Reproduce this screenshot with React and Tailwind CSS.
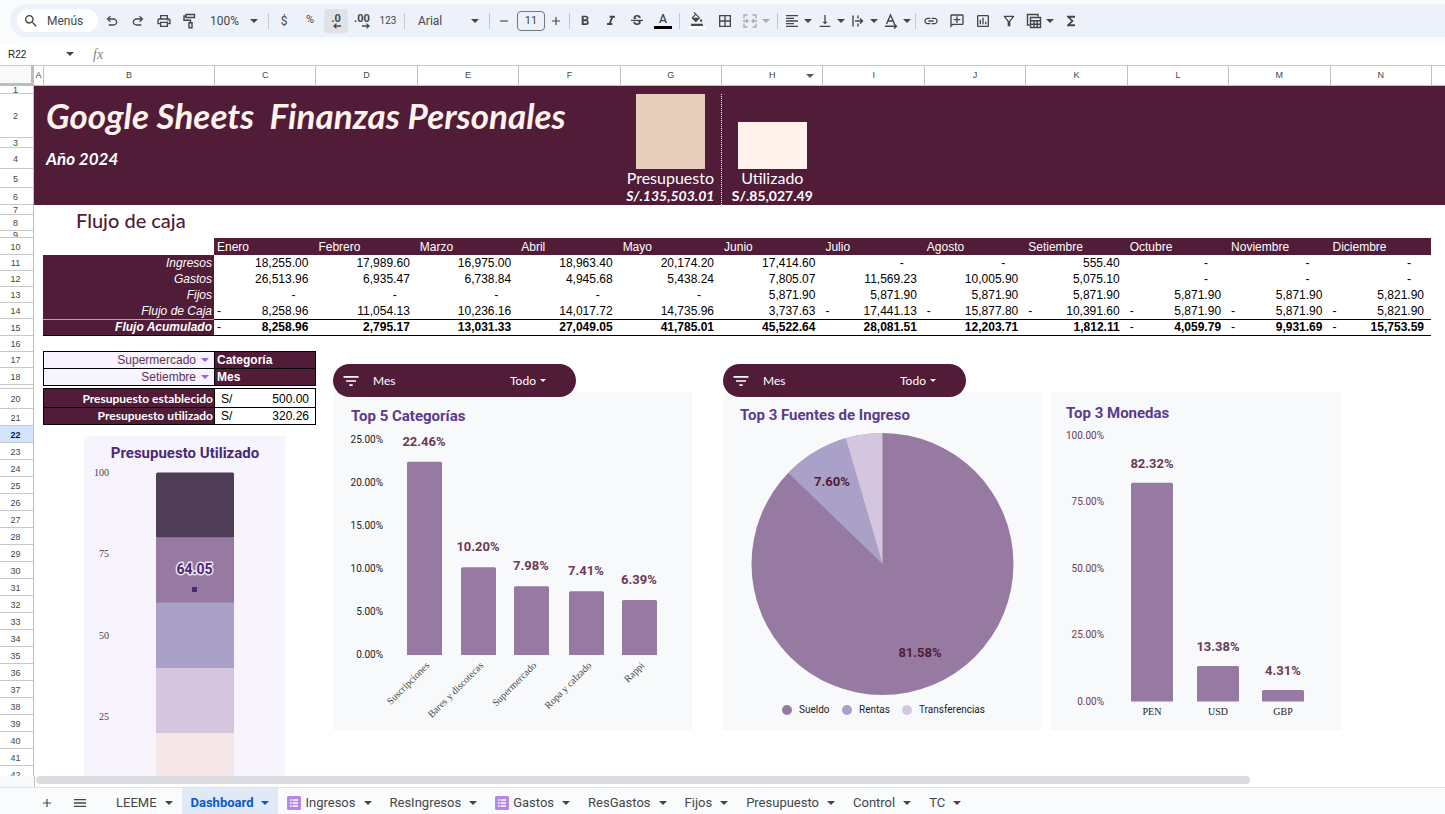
import React from "react";
import {
  MdSearch,
  MdOutlinePrint,
  MdFormatBold,
  MdFormatItalic,
  MdOutlineStrikethroughS,
  MdOutlineFormatColorFill,
  MdBorderAll,
  MdFormatAlignLeft,
  MdVerticalAlignBottom,
  MdLink,
  MdOutlineAddComment,
  MdOutlineInsertChart,
  MdOutlineFilterAlt,
  MdFunctions,
  MdAdd,
  MdRemove,
  MdMenu,
  MdFilterList,
} from "react-icons/md";

const MONTHS = ["Enero", "Febrero", "Marzo", "Abril", "Mayo", "Junio", "Julio", "Agosto", "Setiembre", "Octubre", "Noviembre", "Diciembre"];

const FLOW = [
  { label: "Ingresos", values: [18255, 17989.6, 16975, 18963.4, 20174.2, 17414.6, 0, 0, 555.4, 0, 0, 0] },
  { label: "Gastos", values: [26513.96, 6935.47, 6738.84, 4945.68, 5438.24, 7805.07, 11569.23, 10005.9, 5075.1, 0, 0, 0] },
  { label: "Fijos", values: [0, 0, 0, 0, 0, 5871.9, 5871.9, 5871.9, 5871.9, 5871.9, 5871.9, 5821.9] },
  { label: "Flujo de Caja", values: [-8258.96, 11054.13, 10236.16, 14017.72, 14735.96, 3737.63, -17441.13, -15877.8, -10391.6, -5871.9, -5871.9, -5821.9] },
  { label: "Flujo Acumulado", total: true, values: [-8258.96, 2795.17, 13031.33, 27049.05, 41785.01, 45522.64, 28081.51, 12203.71, 1812.11, -4059.79, -9931.69, -15753.59] },
];

const COLUMNS = ["A", "B", "C", "D", "E", "F", "G", "H", "I", "J", "K", "L", "M", "N", ""];

const TOP_ROWS = [
  [1, "h-2"], [2, "h-11"], [3, "h-2.5"], [4, "h-[21px]"], [5, "h-[19px]"], [6, "h-[17px]"], [7, "h-2.5"],
  [8, "h-4"], [9, "h-[7px]"], [10, "h-[17px]"], [11, "h-4"], [12, "h-4"], [13, "h-4"], [14, "h-4"], [15, "h-[17px]"],
  [16, "h-4"], [17, "h-4"], [18, "h-[17px]"], [19, "h-1"], [20, "h-5"], [21, "h-[17px]"],
];
const LOWER_ROWS = Array.from({ length: 21 }, (_, i) => [22 + i, "h-[17px]"]);
const ROWS = [...TOP_ROWS, ...LOWER_ROWS];

const TABS = [
  { name: "LEEME" },
  { name: "Dashboard", active: true },
  { name: "Ingresos", form: true },
  { name: "ResIngresos" },
  { name: "Gastos", form: true },
  { name: "ResGastos" },
  { name: "Fijos" },
  { name: "Presupuesto" },
  { name: "Control" },
  { name: "TC" },
];

const money = (n) => Math.abs(n).toLocaleString("en-US", { minimumFractionDigits: 2, maximumFractionDigits: 2 });

function Caret({ className = "" }) {
  return (
    <svg viewBox="0 0 8 4" className={`h-1 w-2 shrink-0 ${className}`} fill="currentColor" aria-hidden="true">
      <path d="M0 0h8L4 4z" />
    </svg>
  );
}

function Tool({ label, children, className = "w-6", menu = false }) {
  return (
    <button type="button" aria-label={label} className={`flex h-6 shrink-0 items-center rounded text-[#444746] ${menu ? "gap-1 pl-[3px]" : "justify-center"} ${className}`}>
      {children}
      {menu && <Caret />}
    </button>
  );
}

const Divider = () => <div className="mr-px ml-0.5 h-4 w-px shrink-0 bg-[#c7c7c7]" />;

function Symbol({ d }) {
  return (
    <svg viewBox="0 -960 960 960" className="size-4" fill="currentColor" aria-hidden="true">
      <path d={d} />
    </svg>
  );
}

function Line({ children, className = "size-4" }) {
  return (
    <svg viewBox="0 0 16 16" className={className} fill="none" stroke="currentColor" strokeWidth="1.4" aria-hidden="true">
      {children}
    </svg>
  );
}

function Decimal({ text, right }) {
  return (
    <span className="flex flex-col items-center text-[11px] leading-[11px] font-bold">
      {text}
      <svg viewBox="0 0 8 6" className="-mt-px h-1.5 w-2 self-end" fill="none" stroke="currentColor" strokeWidth="1.3" aria-hidden="true">
        <path d={right ? "M0 3h7M4.500 .6 7 3 4.500 5.400" : "M8 3H1M3.500 .6 1 3l2.500 2.400"} />
      </svg>
    </span>
  );
}

function Toolbar() {
  return (
    <header className="h-[43px] shrink-0 bg-[#f9fbfd] pt-1 pl-2.5">
      <div className="flex h-[33px] items-center gap-0.5 rounded-l-full bg-[#edf2fa] pl-[7px] font-[Roboto,sans-serif] text-[12px] text-[#444746]">
        <button type="button" className="flex h-[23px] w-[81px] shrink-0 items-center gap-2 rounded-full bg-white pl-1.5">
          <MdSearch className="size-4" />
          Menús
        </button>
        <Tool label="Deshacer">
          <Symbol d="M280-200v-80h284q63 0 109.5-40T720-420q0-60-46.5-100T564-560H312l104 104-56 56-200-200 200-200 56 56-104 104h252q97 0 166.5 63T800-420q0 94-69.5 157T564-200H280Z" />
        </Tool>
        <Tool label="Rehacer">
          <Symbol d="M396-200q-97 0-166.5-63T160-420q0-94 69.5-157T396-640h252L544-744l56-56 200 200-200 200-56-56 104-104H396q-63 0-109.5 40T240-420q0 60 46.5 100T396-280h284v80H396Z" />
        </Tool>
        <Tool label="Imprimir"><MdOutlinePrint className="size-4" /></Tool>
        <Tool label="Copiar formato">
          <Line>
            <path d="M4 1.500h8.500v3H4zM4 3H2v4.200h6.500v2.300M7 9.700h3v5H7z" />
          </Line>
        </Tool>
        <button type="button" className="flex h-6 w-[60px] shrink-0 items-center justify-between px-1.5">
          <span>100%</span>
          <Caret />
        </button>
        <Divider />
        <Tool label="Moneda">$</Tool>
        <Tool label="Porcentaje"><span className="text-[11px]">%</span></Tool>
        <Tool label="Reducir decimales" className="w-6 bg-[#dfe3e8]"><Decimal text=".0" /></Tool>
        <Tool label="Aumentar decimales"><Decimal text=".00" right /></Tool>
        <Tool label="Más formatos"><span className="text-[10px]">123</span></Tool>
        <Divider />
        <button type="button" className="flex h-6 w-[77px] shrink-0 items-center justify-between pr-1.5 pl-2.5">
          <span>Arial</span>
          <Caret />
        </button>
        <Divider />
        <Tool label="Reducir tamaño" className="w-[22px]"><MdRemove className="size-3.5" /></Tool>
        <input aria-label="Tamaño de fuente" defaultValue="11" className="h-5 w-7 shrink-0 rounded border border-[#747775] bg-transparent text-center text-[11px]" />
        <Tool label="Aumentar tamaño" className="w-[18px]"><MdAdd className="size-3.5" /></Tool>
        <Divider />
        <Tool label="Negrita"><MdFormatBold className="size-4" /></Tool>
        <Tool label="Cursiva"><MdFormatItalic className="size-4" /></Tool>
        <Tool label="Tachado"><MdOutlineStrikethroughS className="size-4" /></Tool>
        <Tool label="Color del texto">
          <span className="flex w-[18px] flex-col items-center border-b-[3px] border-black text-[12px] leading-[13px] font-medium">A</span>
        </Tool>
        <Divider />
        <Tool label="Color de relleno" className="w-7">
          <span className="flex w-[18px] flex-col items-center border-b-[3px] border-white"><MdOutlineFormatColorFill className="size-3.5" /></span>
        </Tool>
        <Tool label="Bordes"><MdBorderAll className="size-4" /></Tool>
        <Tool label="Combinar celdas" menu className="w-[34px] opacity-40">
          <Line>
            <path d="M5.500 2H2v3.500M10.500 2H14v3.500M5.500 14H2v-3.500M10.500 14H14v-3.500M0.800 8h5M10.200 8h5M4.200 6.200 6 8l-1.800 1.800M11.800 6.200 10 8l1.800 1.800" />
          </Line>
        </Tool>
        <Divider />
        <Tool label="Alinear" menu className="w-[31px]"><MdFormatAlignLeft className="size-4" /></Tool>
        <Tool label="Alineación vertical" menu className="w-[31px]"><MdVerticalAlignBottom className="size-4" /></Tool>
        <Tool label="Ajuste de texto" menu className="w-[31px]">
          <Line><path d="M3 2.500v11M8 2.500v3M8 10.500v3M5 8h7.500M10 5.500 12.500 8 10 10.500" /></Line>
        </Tool>
        <Tool label="Rotación de texto" menu className="w-[31px]">
          <Line><path d="M3.500 11 7.500 2l4 9M5 8h5M2 13.300h11M11 11l2.500 2.300L11 15.500" /></Line>
        </Tool>
        <Divider />
        <Tool label="Insertar enlace"><MdLink className="size-4" /></Tool>
        <Tool label="Insertar comentario"><MdOutlineAddComment className="size-4 -scale-x-100" /></Tool>
        <Tool label="Insertar gráfico"><MdOutlineInsertChart className="size-4" /></Tool>
        <Tool label="Crear filtro"><MdOutlineFilterAlt className="size-4" /></Tool>
        <Tool label="Vistas de tabla" menu className="w-[34px]">
          <Line>
            <path d="M12 3.500V1.500H1.500V12H3.500M4.500 4.500h10v10h-10zM4.500 7.800h10M4.500 11.200h10M8 7.800v6.700M11.200 7.800v6.700" />
          </Line>
        </Tool>
        <Tool label="Funciones"><MdFunctions className="size-4" /></Tool>
      </div>
    </header>
  );
}

function FormulaBar() {
  return (
    <div className="flex h-[23px] shrink-0 items-center border-b border-[#c7c7c7] bg-white pl-2">
      <button type="button" className="flex w-[66px] items-center justify-between font-['Liberation_Sans',Arial,sans-serif] text-[10px] text-[#202124]">
        <span>R22</span>
        <Caret className="text-[#444746]" />
      </button>
      <span className="ml-[19px] font-['Liberation_Serif',serif] text-[14px] text-[#80868b] italic">fx</span>
      <input aria-label="Fórmula" className="ml-3 min-w-0 flex-1 outline-none" />
    </div>
  );
}

function ColumnHeaders() {
  return (
    <div className="flex h-5 shrink-0 text-[9px] text-[#44474a]">
      <div className="w-[34px] shrink-0 border-r-[3px] border-b-[3px] border-[#bdbdbd] bg-[#f8f9fa]" />
      <div className="grid flex-1 grid-cols-[9px_171px_repeat(12,minmax(0,1fr))_14px] border-b border-[#c0c0c0]">
        {COLUMNS.map((c, i) => (
          <div key={i} className="relative flex items-center justify-center border-l border-[#c0c0c0] first:border-l-0">
            {c}
            {c === "H" && <Caret className="absolute right-2 text-[#575b5f]" />}
          </div>
        ))}
      </div>
    </div>
  );
}

function RowHeaders() {
  return (
    <div className="w-[34px] shrink-0 border-r border-[#c0c0c0] text-[9px] text-[#44474a]">
      {ROWS.map(([n, h]) => (
        <div
          key={n}
          className={`flex items-center justify-center overflow-hidden border-b border-[#c7c7c7] pr-0.5 leading-none ${h} ${n === 19 ? "" : "pt-0.5"} ${n === 22 ? "bg-[#d3e3fd] font-bold text-[#041e49]" : ""}`}
        >
          {n === 19 ? "" : n}
        </div>
      ))}
    </div>
  );
}

function Banner() {
  return (
    <section className="grid h-[119px] grid-cols-[9px_171px_repeat(12,minmax(0,1fr))_14px] bg-[#511c37] font-[Lato,sans-serif] text-white">
      <div className="col-start-2 col-end-7 pt-2 pl-[3px] font-bold text-[#fff3eb] italic">
        <h1 className="text-[35px] leading-[42px] whitespace-pre">{"Google Sheets  Finanzas Personales"}</h1>
        <p className="pt-3 text-[17px] leading-[22px] text-white">Año 2024</p>
      </div>
      <div className="col-start-7 mt-2 flex flex-col items-center justify-end">
        <div className="h-[75px] w-[69px] bg-[#e6cebd]" />
        <p className="text-[16px] leading-[18px]">Presupuesto</p>
        <p className="text-[14px] leading-[18px] font-bold italic">S/.135,503.01</p>
      </div>
      <div className="col-start-8 mt-2 flex flex-col items-center justify-end border-l border-dotted border-white">
        <div className="h-[47px] w-[69px] bg-[#fff3eb]" />
        <p className="text-[16px] leading-[18px]">Utilizado</p>
        <p className="text-[14px] leading-[18px] font-bold">S/.85,027.49</p>
      </div>
    </section>
  );
}

function Amount({ value }) {
  if (value === 0) return <div className="pr-5 text-right">-</div>;
  return (
    <div className="flex justify-between pr-[7px] pl-[3px]">
      <span className="font-normal">{value < 0 ? "-" : ""}</span>
      <span>{money(value)}</span>
    </div>
  );
}

function CashFlow() {
  return (
    <section className="pr-[14px] pl-[9px]">
      <h2 className="h-[33px] pl-[33px] font-[Lato,sans-serif] text-[20px] leading-[30px] font-medium text-[#511c37]">Flujo de caja</h2>
      <table className="w-full table-fixed border-separate border-spacing-0 text-[12px] leading-4">
        <thead>
          <tr>
            <th className="w-[171px]" aria-label="Concepto" />
            {MONTHS.map((m) => (
              <th key={m} scope="col" className="h-[17px] bg-[#511c37] p-0 pt-0.5 pl-[3px] text-left leading-[15px] font-normal text-white">{m}</th>
            ))}
          </tr>
        </thead>
        <tbody>
          {FLOW.map((row) => (
            <tr key={row.label} className={row.total ? "font-bold leading-[15px]" : ""}>
              <th
                scope="row"
                className={`bg-[#511c37] p-0 pr-0.5 text-right text-white italic ${row.total ? "border-y border-t-[#b9a3b0] border-b-black font-bold" : "font-normal"}`}
              >
                {row.label}
              </th>
              {row.values.map((v, i) => (
                <td key={i} className={`p-0 text-black ${row.total ? "border-y border-black" : ""}`}>
                  <Amount value={v} />
                </td>
              ))}
            </tr>
          ))}
        </tbody>
      </table>
    </section>
  );
}

function CellSelect({ id, value }) {
  return (
    <div className="relative flex items-center bg-[#f7f3ff] text-[#5c3550]">
      <select id={id} defaultValue={value} className="h-4 w-full appearance-none pr-[18px] leading-4 [text-align-last:right]">
        <option>{value}</option>
      </select>
      <Caret className="pointer-events-none absolute right-[5px] text-[#9361f0]" />
    </div>
  );
}

function FilterCells() {
  const head = "bg-[#511c37] font-bold text-white";
  return (
    <div className="w-[273px] text-[12px] leading-4">
      <table className="w-full table-fixed border-collapse">
        <tbody>
          {[["categoria", "Supermercado", "Categoría"], ["mes", "Setiembre", "Mes"]].map(([id, value, label]) => (
            <tr key={id}>
              <td className="w-[171px] border border-black p-0"><CellSelect id={id} value={value} /></td>
              <th scope="row" className={`border border-black p-0 pl-0.5 text-left ${head}`}><label htmlFor={id}>{label}</label></th>
            </tr>
          ))}
        </tbody>
      </table>
      <table className="mt-0.5 w-full table-fixed border-collapse">
        <tbody>
          {[["Presupuesto establecido", "500.00", "h-[19px]"], ["Presupuesto utilizado", "320.26", "h-[17px]"]].map(([label, value, h]) => (
            <tr key={label} className={h}>
              <th scope="row" className={`w-[171px] border border-black p-0 pr-px text-right align-bottom font-[Lato,sans-serif] ${head}`}>{label}</th>
              <td className="border border-black p-0 align-bottom">
                <div className="flex justify-between pr-1.5 pl-1.5"><span>S/</span><span>{value}</span></div>
              </td>
            </tr>
          ))}
        </tbody>
      </table>
    </div>
  );
}

const TITLE = "font-[Roboto,sans-serif] text-[15px] font-bold fill-[#5b3a8c]";
const VALUE = "font-[Roboto,sans-serif] text-[13px] font-bold";

function BudgetChart() {
  const bands = ["#4f3c57", "#967aa1", "#aaa1c8", "#d5c6e0", "#f5e6e8"];
  return (
    <svg width="201" height="385" viewBox="0 0 201 385" role="img" aria-label="Presupuesto Utilizado" className="mt-[11px] ml-[41px] bg-[#f7f4fe]">
      <text x="101" y="22" textAnchor="middle" className="font-[Roboto,sans-serif] text-[15px] font-bold fill-[#4b2a74]">Presupuesto Utilizado</text>
      {[100, 75, 50, 25].map((t, i) => (
        <text key={t} x="25" y={40 + i * 81.3} textAnchor="end" className="font-['Liberation_Serif',serif] text-[10px] fill-[#444444]">{t}</text>
      ))}
      {bands.map((c, i) => (
        <rect key={c} x="72" y={36.5 + i * 65.2} width="78" height="65.2" rx={i === 0 ? 1.5 : 0} fill={c} />
      ))}
      <text x="110.5" y="138" textAnchor="middle" strokeWidth="3" strokeLinejoin="round" className="font-[Roboto,sans-serif] text-[14px] font-bold fill-[#4b2a74] stroke-[#ece4f4] [paint-order:stroke]">64.05</text>
      <rect x="108" y="151" width="5" height="5" fill="#4b2a74" />
    </svg>
  );
}

function CategoriesChart() {
  const bars = [
    ["Suscripciones", 22.46, 74], ["Bares y discotecas", 10.2, 128], ["Supermercado", 7.98, 181],
    ["Ropa y calzado", 7.41, 236], ["Rappi", 6.39, 289],
  ];
  return (
    <svg width="359" height="338" viewBox="0 0 359 338" role="img" aria-label="Top 5 Categorías" className="bg-[#f8f9fb]">
      <text x="18" y="29" className={TITLE}>Top 5 Categorías</text>
      {[25, 20, 15, 10, 5, 0].map((t, i) => (
        <text key={t} x="50" y={51 + i * 43} textAnchor="end" className="font-[Roboto,sans-serif] text-[10px] fill-[#222222]">{t.toFixed(2)}%</text>
      ))}
      {bars.map(([name, v, x]) => {
        const h = v * 8.6;
        return (
          <g key={name}>
            <path d={`M${x} 263v${-(h - 1.5)}q0-1.500 1.500-1.500h32q1.500 0 1.500 1.500v${h - 1.5}z`} fill="#967aa1" />
            <text x={x + 17} y={262 - h - 15} textAnchor="middle" className={`${VALUE} fill-[#6b3a56]`}>{v.toFixed(2)}%</text>
            <text transform={`translate(${x + 23} 274) rotate(-45)`} textAnchor="end" className="font-['Liberation_Serif',serif] text-[10px] fill-[#444444]">{name}</text>
          </g>
        );
      })}
    </svg>
  );
}

function IncomeChart() {
  const legend = [["Sueldo", 64, "#967aa1"], ["Rentas", 124, "#aaa1c8"], ["Transferencias", 184, "#d5c6e0"]];
  return (
    <svg width="318" height="338" viewBox="0 0 318 338" role="img" aria-label="Top 3 Fuentes de Ingreso" className="bg-[#f8f9fb]">
      <text x="17" y="28" className={TITLE}>Top 3 Fuentes de Ingreso</text>
      <circle cx="159.5" cy="172" r="131" fill="#967aa1" />
      <path d="M159.500 172 65.400 80.900A131 131 0 0 1 122.700 46.300z" fill="#aaa1c8" />
      <path d="M159.500 172 122.700 46.300A131 131 0 0 1 159.500 41z" fill="#d5c6e0" />
      <text x="109" y="94" textAnchor="middle" className={`${VALUE} fill-[#511c37]`}>7.60%</text>
      <text x="197" y="265" textAnchor="middle" className={`${VALUE} fill-[#511c37]`}>81.58%</text>
      {legend.map(([name, x, c]) => (
        <g key={name}>
          <circle cx={x} cy="318" r="5" fill={c} />
          <text x={x + 12} y="321" className="font-[Roboto,sans-serif] text-[10px] fill-[#222222]">{name}</text>
        </g>
      ))}
    </svg>
  );
}

function CurrencyChart() {
  const bars = [["PEN", 82.32, 80], ["USD", 13.38, 146], ["GBP", 4.31, 211]];
  return (
    <svg width="290" height="338" viewBox="0 0 290 338" role="img" aria-label="Top 3 Monedas" className="bg-[#f8f9fb]">
      <text x="15" y="26" className={TITLE}>Top 3 Monedas</text>
      {[100, 75, 50, 25, 0].map((t, i) => (
        <text key={t} x="53" y={47 + i * 66.4} textAnchor="end" className="font-[Roboto,sans-serif] text-[10px] fill-[#6b3a56]">{t.toFixed(2)}%</text>
      ))}
      {bars.map(([name, v, x]) => {
        const h = v * 2.656;
        return (
          <g key={name}>
            <path d={`M${x} 309.500v${-(h - 1.5)}q0-1.500 1.500-1.500h39q1.500 0 1.500 1.500v${h - 1.5}z`} fill="#967aa1" />
            <text x={x + 21} y={309.5 - h - 15} textAnchor="middle" className={`${VALUE} fill-[#6b3a56]`}>{v.toFixed(2)}%</text>
            <text x={x + 21} y="323" textAnchor="middle" className="font-['Liberation_Serif',serif] text-[10px] fill-[#222222]">{name}</text>
          </g>
        );
      })}
    </svg>
  );
}

function Slicer({ id }) {
  return (
    <div className="relative z-10 -mb-[5px] flex h-[33px] w-[243px] items-center rounded-full bg-[#511c37] pl-2 font-[Lato,sans-serif] text-[12px] text-white">
      <MdFilterList className="size-5" />
      <label htmlFor={id} className="ml-3 flex-1">Mes</label>
      <div className="relative mr-[30px] flex items-center">
        <select id={id} defaultValue="Todo" className="w-9 appearance-none">
          <option>Todo</option>
        </select>
        <svg viewBox="0 0 6 3" className="pointer-events-none absolute right-0 h-[3px] w-1.5" fill="currentColor" aria-hidden="true"><path d="M0 0h6L3 3z" /></svg>
      </div>
    </div>
  );
}

function Sheet() {
  return (
    <main className="flex min-h-0 flex-1 overflow-hidden bg-white">
      <RowHeaders />
      <div className="min-w-0 flex-1">
        <Banner />
        <CashFlow />
        <div className="flex pt-[15px] pl-[9px]">
          <div className="shrink-0">
            <FilterCells />
            <BudgetChart />
          </div>
          <div className="ml-[17px] flex shrink-0 items-start pt-[13px]">
            <div>
              <Slicer id="mes-categorias" />
              <CategoriesChart />
            </div>
            <div className="ml-[31px]">
              <Slicer id="mes-ingresos" />
              <IncomeChart />
            </div>
            <div className="ml-2.5 pt-7">
              <CurrencyChart />
            </div>
          </div>
        </div>
      </div>
    </main>
  );
}

function FormIcon() {
  return (
    <svg viewBox="0 0 14 14" className="size-3.5" aria-hidden="true">
      <rect width="14" height="14" rx="1.5" fill="#b886e8" />
      <path d="M3 4h1.500M3 7h1.500M3 10h1.500M5.500 4H11M5.500 7H11M5.500 10H11" stroke="#ffffff" strokeWidth="1.5" />
    </svg>
  );
}

function SheetTabs() {
  return (
    <footer className="flex h-[27px] shrink-0 items-stretch border-t border-[#dfe1e5] bg-[#f9fbfd] pl-9 font-[Roboto,sans-serif] text-[13px] text-[#444746]">
      <button type="button" aria-label="Añadir hoja" className="flex w-[22px] items-center justify-center pt-1"><MdAdd className="size-3.5" /></button>
      <button type="button" aria-label="Todas las hojas" className="mr-[15px] ml-2.5 flex w-6 items-center justify-center pt-1"><MdMenu className="size-4" /></button>
      {TABS.map((t) => (
        <button
          key={t.name}
          type="button"
          className={`flex items-center gap-2 px-[9px] pt-1 ${t.active ? "bg-[#e1e9f7] font-bold text-[#0b57d0]" : "font-normal"}`}
        >
          <span className="flex items-center gap-1">
            {t.form && <FormIcon />}
            {t.name}
          </span>
          <Caret />
        </button>
      ))}
    </footer>
  );
}

export default function App() {
  return (
    <div className="flex h-screen flex-col overflow-hidden bg-white font-['Liberation_Sans',Arial,sans-serif]">
      <Toolbar />
      <FormulaBar />
      <ColumnHeaders />
      <Sheet />
      <div className="flex h-[11px] shrink-0 bg-white">
        <div className="w-[35px] shrink-0 border-r border-[#c0c0c0] bg-[#f8f9fa]" />
        <div className="ml-px h-2 w-[84%] rounded-full bg-[#dadce0]" />
      </div>
      <SheetTabs />
    </div>
  );
}
